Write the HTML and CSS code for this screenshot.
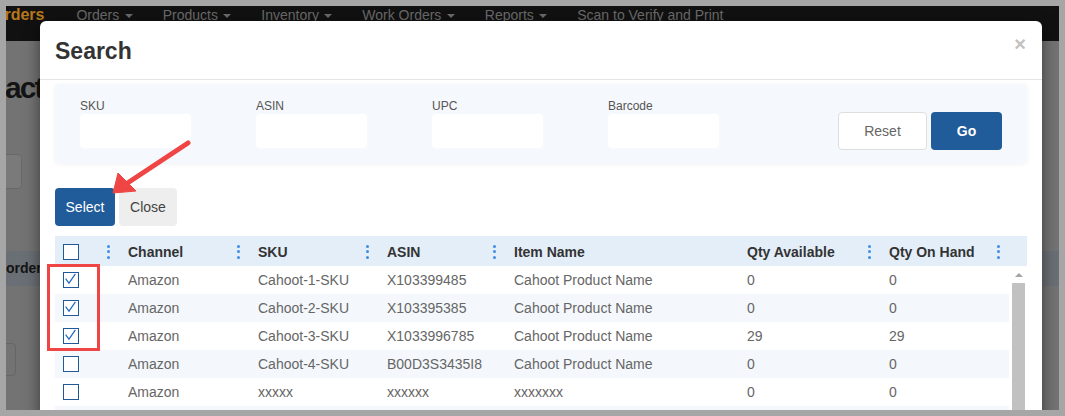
FILE: index.html
```html
<!DOCTYPE html>
<html>
<head>
<meta charset="utf-8">
<title>Search</title>
<link rel="stylesheet" href="styles.css">
</head>
<body>
<div class="frame">
  <div class="viewport">
    <nav class="nav">
      <span class="brand">Orders</span>
      <span class="nav-item">Orders <i class="caret"></i></span>
      <span class="nav-item">Products <i class="caret"></i></span>
      <span class="nav-item">Inventory <i class="caret"></i></span>
      <span class="nav-item">Work Orders <i class="caret"></i></span>
      <span class="nav-item">Reports <i class="caret"></i></span>
      <span class="nav-item">Scan to Verify and Print</span>
    </nav>
    <div class="page">
      <h1 class="page-title">Transactions</h1>
      <div class="page-btn"></div>
      <div class="page-band"><span>order</span></div>
      <div class="page-box"></div>
    </div>

    <div class="modal">
      <div class="modal-header">
        <h2 class="modal-title">Search</h2>
        <span class="close">&times;</span>
      </div>
      <div class="modal-body">
        <div class="search-panel">
          <div class="field"><label>SKU</label><div class="input"></div></div>
          <div class="field"><label>ASIN</label><div class="input"></div></div>
          <div class="field"><label>UPC</label><div class="input"></div></div>
          <div class="field"><label>Barcode</label><div class="input"></div></div>
          <div class="actions">
            <button class="btn btn-reset">Reset</button>
            <button class="btn btn-go">Go</button>
          </div>
        </div>

        <div class="toolbar">
          <button class="btn btn-select">Select</button>
          <button class="btn btn-close">Close</button>
        </div>

        <div class="grid">
          <div class="thead">
            <div class="th first"><span class="cb"></span><span class="dots"><i></i><i></i><i></i></span></div>
            <div class="th"><span>Channel</span><span class="dots"><i></i><i></i><i></i></span></div>
            <div class="th"><span>SKU</span><span class="dots"><i></i><i></i><i></i></span></div>
            <div class="th"><span>ASIN</span><span class="dots"><i></i><i></i><i></i></span></div>
            <div class="th"><span>Item Name</span></div>
            <div class="th"><span>Qty Available</span><span class="dots"><i></i><i></i><i></i></span></div>
            <div class="th"><span>Qty On Hand</span><span class="dots"><i></i><i></i><i></i></span></div>
            <div class="th"></div>
          </div>
          <div class="tbody">
            <div class="rows">
              <div class="tr">
                <div class="td first"><span class="cb"><svg viewBox="0 0 13 13" width="13" height="13"><path d="M1.6 5.6 L5 10.2 L11.4 0.9"/></svg></span></div>
                <div class="td">Amazon</div><div class="td">Cahoot-1-SKU</div><div class="td">X103399485</div><div class="td">Cahoot Product Name</div><div class="td">0</div><div class="td">0</div><div></div>
              </div>
              <div class="tr">
                <div class="td first"><span class="cb"><svg viewBox="0 0 13 13" width="13" height="13"><path d="M1.6 5.6 L5 10.2 L11.4 0.9"/></svg></span></div>
                <div class="td">Amazon</div><div class="td">Cahoot-2-SKU</div><div class="td">X103395385</div><div class="td">Cahoot Product Name</div><div class="td">0</div><div class="td">0</div><div></div>
              </div>
              <div class="tr">
                <div class="td first"><span class="cb"><svg viewBox="0 0 13 13" width="13" height="13"><path d="M1.6 5.6 L5 10.2 L11.4 0.9"/></svg></span></div>
                <div class="td">Amazon</div><div class="td">Cahoot-3-SKU</div><div class="td">X1033996785</div><div class="td">Cahoot Product Name</div><div class="td">29</div><div class="td">29</div><div></div>
              </div>
              <div class="tr">
                <div class="td first"><span class="cb"></span></div>
                <div class="td">Amazon</div><div class="td">Cahoot-4-SKU</div><div class="td">B00D3S3435I8</div><div class="td">Cahoot Product Name</div><div class="td">0</div><div class="td">0</div><div></div>
              </div>
              <div class="tr">
                <div class="td first"><span class="cb"></span></div>
                <div class="td">Amazon</div><div class="td">xxxxx</div><div class="td">xxxxxx</div><div class="td">xxxxxxx</div><div class="td">0</div><div class="td">0</div><div></div>
              </div>
              <div class="tr"></div>
            </div>
            <div class="scroll">
              <div class="scroll-up"><i></i></div>
              <div class="thumb"></div>
            </div>
          </div>
        </div>
      </div>

      <div class="annot-box"></div>
      <svg class="annot-arrow" width="200" height="200" viewBox="0 0 200 200">
        <line x1="148" y1="122" x2="86" y2="163" />
        <polygon points="73,172 96,170 78,152" />
      </svg>
    </div>
  </div>
</div>
</body>
</html>
```

FILE: styles.css
```css
* {
  box-sizing: border-box;
  margin: 0;
  padding: 0;
}

html, body {
  width: 1065px;
  height: 416px;
  overflow: hidden;
}

body {
  font-family: "Liberation Sans", Arial, sans-serif;
  background: #a6a6a6;
}

.frame {
  width: 1065px;
  height: 416px;
  padding: 6px;
  background: #a6a6a6;
}

.viewport {
  position: relative;
  width: 1053px;
  height: 404px;
  overflow: hidden;
  background: #737373;
}

/* ---------- dimmed page behind modal ---------- */
.nav {
  height: 35px;
  background: #111;
  display: flex;
  align-items: flex-start;
  white-space: nowrap;
  font-size: 14px;
  line-height: 18px;
  color: #6a6a6a;
}

.brand {
  margin-left: -14px;
  padding-right: 17px;
  font-size: 16px;
  font-weight: bold;
  color: #b7781c;
}

.nav-item {
  padding: 0 15px;
}

.caret {
  display: inline-block;
  width: 0;
  height: 0;
  margin-left: 1.5px;
  vertical-align: middle;
  border-top: 4px solid #6a6a6a;
  border-left: 4px solid transparent;
  border-right: 4px solid transparent;
}

.page {
  margin-left: -65px;
}

.page-title {
  margin-top: 30px;
  margin-left: -6px;
  font-size: 30px;
  line-height: 34px;
  font-weight: bold;
  letter-spacing: -2px;
  color: #141414;
  white-space: nowrap;
}

.page-btn {
  margin-top: 49px;
  width: 81px;
  height: 35px;
  border: 1px solid #686868;
  border-radius: 4px;
  background: #7a7a7a;
}

.page-band {
  margin-top: 62px;
  height: 35px;
  padding-left: 65px;
  background: #6a6f75;
  font-size: 14px;
  font-weight: bold;
  line-height: 35px;
  color: #141414;
}

.page-box {
  margin-top: 57px;
  width: 75px;
  height: 33px;
  border: 1px solid #666;
  border-radius: 4px;
}

/* ---------- modal ---------- */
.modal {
  position: absolute;
  left: 34px;
  top: 15px;
  width: 1002px;
  height: 430px;
  background: #fff;
  border-radius: 6px;
  box-shadow: 0 5px 15px rgba(0, 0, 0, 0.5);
}

.modal-header {
  display: flex;
  justify-content: space-between;
  align-items: flex-start;
  padding: 17px 15px 15px;
  border-bottom: 1px solid #e5e5e5;
}

.modal-title {
  font-size: 23px;
  line-height: 26px;
  font-weight: bold;
  color: #333;
}

.close {
  margin-top: -4px;
  margin-right: 1px;
  font-size: 20px;
  line-height: 1;
  font-weight: bold;
  color: #c2c2c2;
}

.modal-body {
  padding: 4px 15px 0;
}

.search-panel {
  display: flex;
  align-items: flex-end;
  padding: 15px 25px;
  background: #f5f8fc;
  border-radius: 4px;
  box-shadow: 0 1px 5px rgba(0, 0, 0, 0.06);
}

.field {
  width: 111px;
  margin-right: 65px;
}

.field label {
  display: block;
  font-size: 12px;
  line-height: 15px;
  color: #555;
}

.field .input {
  height: 34px;
  background: #fff;
  border-radius: 4px;
}

.actions {
  margin-left: auto;
  margin-bottom: -2px;
  display: flex;
  gap: 4px;
}

.btn {
  height: 38px;
  display: flex;
  align-items: center;
  justify-content: center;
  font-family: "Liberation Sans", Arial, sans-serif;
  font-size: 14px;
  border: 0;
  border-radius: 4px;
}

.btn-reset {
  width: 89px;
  background: #fff;
  border: 1px solid #dedede;
  color: #666;
}

.btn-go {
  width: 71px;
  background: #1f5c99;
  color: #fff;
  font-weight: bold;
}

.toolbar {
  margin-top: 25px;
  display: flex;
  gap: 4px;
}

.btn-select {
  width: 60px;
  background: #1f5c99;
  color: #fff;
}

.btn-close {
  width: 58px;
  background: #eee;
  color: #444;
}

/* ---------- grid ---------- */
.grid {
  margin-top: 10px;
}

.thead,
.tr {
  display: grid;
  grid-template-columns: 58px 130px 129px 127px 233px 142px 129px 1fr;
}

.thead {
  height: 30px;
  background: #e3eef9;
}

.th {
  display: flex;
  align-items: center;
  justify-content: space-between;
  padding: 1px 3px 0 15px;
  font-size: 14px;
  font-weight: bold;
  color: #333;
  white-space: nowrap;
}

.th.first,
.td.first {
  padding-left: 8px;
}

.dots {
  display: flex;
  flex-direction: column;
  gap: 2.5px;
  width: 4px;
  align-items: center;
}

.dots i {
  display: block;
  width: 3px;
  height: 3px;
  border-radius: 50%;
  background: #3b8de3;
}

.cb {
  display: block;
  width: 16px;
  height: 16px;
  border: 1.5px solid #1d5a97;
  background: #fff;
}

.cb svg {
  display: block;
  fill: none;
  stroke: #1f6cbd;
  stroke-width: 1.2;
}

.tbody {
  display: flex;
}

.rows {
  flex: 1;
}

.tr {
  height: 28px;
  align-items: center;
  font-size: 14px;
  color: #666;
  background: #fff;
}

.tr:nth-child(even) {
  background: #f4f8fc;
}

.td {
  padding-left: 15px;
  white-space: nowrap;
}

.scroll {
  width: 18px;
  display: flex;
  flex-direction: column;
  background: #fff;
}

.scroll-up {
  height: 17px;
  display: flex;
  align-items: center;
  justify-content: center;
  padding-left: 1px;
}

.scroll-up i {
  display: block;
  width: 0;
  height: 0;
  border-bottom: 4px solid #a3a3a3;
  border-left: 4px solid transparent;
  border-right: 4px solid transparent;
}

.thumb {
  flex: 1;
  margin: 0 2px 0 3px;
  background: #c1c1c1;
}

/* ---------- annotations ---------- */
.annot-box {
  position: absolute;
  left: 7px;
  top: 243px;
  width: 53px;
  height: 87px;
  border: 3px solid #ef4545;
}

.annot-arrow {
  position: absolute;
  left: 0;
  top: 0;
  overflow: visible;
}

.annot-arrow line {
  stroke: #ef4545;
  stroke-width: 5;
  stroke-linecap: round;
}

.annot-arrow polygon {
  fill: #ef4545;
  stroke: #ef4545;
  stroke-width: 1;
  stroke-linejoin: round;
}
```
